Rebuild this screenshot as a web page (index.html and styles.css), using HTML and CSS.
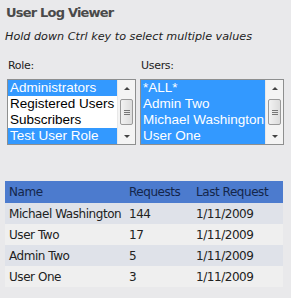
FILE: index.html
```html
<!DOCTYPE html>
<html lang="en">
<head>
  <meta charset="UTF-8">
  <title>User Log Viewer</title>
  <link rel="stylesheet" href="styles.css">
</head>
<body>

  <div class="viewer">
    <h2>User Log Viewer</h2>
    <p class="hint">Hold down Ctrl key to select multiple values</p>

    <div class="filtros">
      <div class="filtro rol">
        <label>Role:</label>
        <div class="listbox">
          <ul>
            <li class="sel">Administrators</li>
            <li>Registered Users</li>
            <li>Subscribers</li>
            <li class="sel">Test User Role</li>
          </ul>
          <div class="scroll">
            <span class="flecha arriba"></span>
            <span class="pista"><span class="thumb"><i></i><i></i><i></i></span></span>
            <span class="flecha abajo"></span>
          </div>
        </div>
      </div>

      <div class="filtro usuarios">
        <label>Users:</label>
        <div class="listbox">
          <ul>
            <li class="sel">*ALL*</li>
            <li class="sel">Admin Two</li>
            <li class="sel">Michael Washington</li>
            <li class="sel">User One</li>
          </ul>
          <div class="scroll">
            <span class="flecha arriba"></span>
            <span class="pista"><span class="thumb"><i></i><i></i><i></i></span></span>
            <span class="flecha abajo"></span>
          </div>
        </div>
      </div>
    </div>

    <table class="log">
      <thead>
        <tr>
          <th class="nombre">Name</th>
          <th class="req">Requests</th>
          <th>Last Request</th>
        </tr>
      </thead>
      <tbody>
        <tr><td>Michael Washington</td><td>144</td><td>1/11/2009</td></tr>
        <tr><td>User Two</td><td>17</td><td>1/11/2009</td></tr>
        <tr><td>Admin Two</td><td>5</td><td>1/11/2009</td></tr>
        <tr><td>User One</td><td>3</td><td>1/11/2009</td></tr>
      </tbody>
    </table>
  </div>

</body>
</html>
```

FILE: styles.css
```css
body {
  margin: 0;
  background-color: #e9e9eb;
  font-family: "DejaVu Sans", Verdana, sans-serif;
  color: #222;
}

.viewer {
  padding: 5px 5px;
}

h2 {
  margin: 0;
  font-size: 13px;
  line-height: 16px;
  letter-spacing: -0.8px;
  color: #4a4a4a;
  padding-left: 1px;
}

.hint {
  margin: 9px 0 0 0;
  font-size: 11.2px;
  line-height: 14px;
  font-style: italic;
  color: #222;
}

.filtros {
  display: flex;
  gap: 4px;
  margin-top: 15px;
  padding-left: 2px;
}

.filtro label {
  display: block;
  font-size: 11px;
  line-height: 13px;
  letter-spacing: -0.3px;
  margin: 0 0 7px 1px;
}

.rol .listbox {
  width: 127px;
}

.usuarios .listbox {
  width: 142px;
}

.listbox {
  display: flex;
  background: #fff;
  border: 1px solid #8e8f8f;
  height: 64px;
}

.listbox ul {
  flex: 1;
  list-style: none;
  margin: 0;
  padding: 0;
  font-family: "Liberation Sans", Arial, sans-serif;
  font-size: 13.5px;
  overflow: hidden;
  white-space: nowrap;
}

.listbox li {
  height: 16px;
  line-height: 16px;
  padding-left: 2px;
  color: #000;
}

.listbox li.sel {
  background-color: #3399ff;
  color: #fff;
}

.scroll {
  width: 17px;
  display: flex;
  flex-direction: column;
  background: #f4f4f4;
  border-left: 1px solid #e8e8e8;
}

.flecha {
  height: 16px;
  display: flex;
  align-items: center;
  justify-content: center;
}

.flecha::before {
  content: "";
  border-left: 3px solid transparent;
  border-right: 3px solid transparent;
}

.arriba::before {
  border-bottom: 3px solid #444;
}

.abajo::before {
  border-top: 3px solid #444;
}

.pista {
  flex: 1;
  display: flex;
  align-items: center;
  justify-content: center;
}

.thumb {
  width: 13px;
  height: 26px;
  box-sizing: border-box;
  border: 1px solid #9a9a9a;
  border-radius: 2px;
  background: linear-gradient(to right, #f2f2f2, #dcdcdc);
  display: flex;
  flex-direction: column;
  align-items: center;
  justify-content: center;
  gap: 1px;
}

.thumb i {
  display: block;
  width: 6px;
  height: 1px;
  background: #777;
}

.log {
  margin-top: 36px;
  width: 278px;
  border-collapse: collapse;
  font-size: 12px;
  letter-spacing: -0.45px;
}

.log th {
  background-color: #4c7bce;
  color: #14264a;
  font-weight: normal;
  text-align: left;
  height: 22px;
  padding: 0 0 0 4px;
  white-space: nowrap;
}

.log td {
  height: 21px;
  padding: 0 0 0 4px;
  color: #222;
  white-space: nowrap;
}

.log .nombre {
  width: 116px;
}

.log .req {
  width: 63px;
}

.log tbody tr:nth-child(odd) {
  background-color: #dfe2e9;
}

.log tbody tr:nth-child(even) {
  background-color: #efefef;
}
```
